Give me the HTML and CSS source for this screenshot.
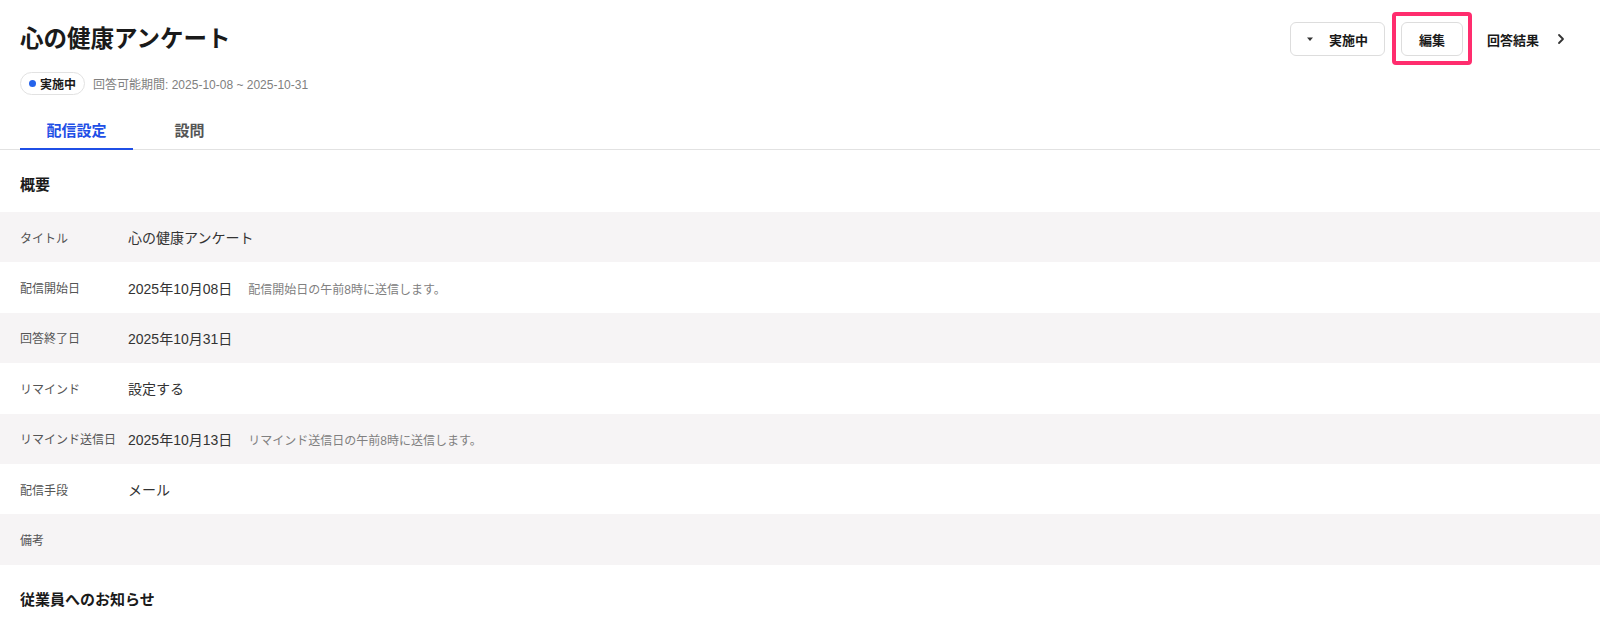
FILE: index.html
```html
<!DOCTYPE html>
<html lang="ja">
<head>
    <meta charset="UTF-8">
    <meta name="viewport" content="width=device-width, initial-scale=1.0">
    <title>心の健康アンケート</title>
    <link rel="stylesheet" href="styles.css">
</head>
<body>
    <!-- Header -->
    <header class="page-header">
        <div class="header-main">
            <h1 class="page-title">心の健康アンケート</h1>
            <div class="meta">
                <span class="status-badge"><span class="status-dot"></span>実施中</span>
                <span class="meta-period">回答可能期間: 2025-10-08 ~ 2025-10-31</span>
            </div>
        </div>
        <div class="header-actions">
            <button class="btn btn-status">
                <svg class="caret" width="10" height="10" viewBox="0 0 10 10"><path d="M2 3.5h6L5 7z" fill="#333"/></svg>
                実施中
            </button>
            <div class="highlight-wrap">
                <button class="btn btn-edit">編集</button>
                <span class="highlight"></span>
            </div>
            <a href="#" class="results-link">
                回答結果
                <svg width="16" height="16" viewBox="0 0 16 16"><path d="M6 4l4 4-4 4" fill="none" stroke="#333" stroke-width="1.8" stroke-linecap="round" stroke-linejoin="round"/></svg>
            </a>
        </div>
    </header>

    <!-- Tabs -->
    <nav class="tabs">
        <a href="#" class="tab active">配信設定</a>
        <a href="#" class="tab">設問</a>
    </nav>

    <!-- Overview -->
    <section class="section">
        <h2 class="section-title">概要</h2>
        <div class="detail-list">
            <div class="detail-row">
                <div class="detail-label">タイトル</div>
                <div class="detail-value">心の健康アンケート</div>
            </div>
            <div class="detail-row">
                <div class="detail-label">配信開始日</div>
                <div class="detail-value">2025年10月08日<span class="detail-note">配信開始日の午前8時に送信します。</span></div>
            </div>
            <div class="detail-row">
                <div class="detail-label">回答終了日</div>
                <div class="detail-value">2025年10月31日</div>
            </div>
            <div class="detail-row">
                <div class="detail-label">リマインド</div>
                <div class="detail-value">設定する</div>
            </div>
            <div class="detail-row">
                <div class="detail-label">リマインド送信日</div>
                <div class="detail-value">2025年10月13日<span class="detail-note">リマインド送信日の午前8時に送信します。</span></div>
            </div>
            <div class="detail-row">
                <div class="detail-label">配信手段</div>
                <div class="detail-value">メール</div>
            </div>
            <div class="detail-row">
                <div class="detail-label">備考</div>
                <div class="detail-value"></div>
            </div>
        </div>
    </section>

    <section class="section">
        <h2 class="section-title">従業員へのお知らせ</h2>
    </section>
</body>
</html>
```

FILE: styles.css
```css
:root {
    --text-main: #1a1a1a;
    --text-body: #333333;
    --text-label: #555555;
    --text-muted: #808080;
    --accent-blue: #1f4fe6;
    --border: #e2e2e2;
    --row-alt: #f6f4f5;
    --highlight: #ff2d6e;
}

body {
    margin: 0;
    font-family: "Liberation Sans", "Noto Sans CJK JP", sans-serif;
    color: var(--text-body);
    background: #ffffff;
}

/* Header */
.page-header {
    display: flex;
    justify-content: space-between;
    align-items: flex-start;
    padding: 22px 23px 0 20px;
}

.page-title {
    margin: 0;
    font-size: 23.5px;
    line-height: 34px;
    font-weight: 700;
    color: var(--text-main);
}

.meta {
    display: flex;
    align-items: center;
    gap: 8px;
    margin-top: 16px;
}

.status-badge {
    display: inline-flex;
    align-items: center;
    gap: 4px;
    height: 21px;
    padding: 0 8px 0 8px;
    border: 1px solid var(--border);
    border-radius: 12px;
    font-size: 12px;
    font-weight: 700;
    color: var(--text-main);
}

.status-dot {
    width: 7px;
    height: 7px;
    border-radius: 50%;
    background: #2563eb;
}

.meta-period {
    font-size: 12px;
    color: var(--text-muted);
}

.header-actions {
    display: flex;
    align-items: center;
    gap: 16px;
}

.btn {
    display: inline-flex;
    align-items: center;
    height: 34px;
    border: 1px solid #dddddd;
    border-radius: 6px;
    background: #ffffff;
    font-family: inherit;
    font-size: 13px;
    font-weight: 700;
    color: var(--text-main);
    cursor: pointer;
}

.btn-status {
    gap: 14px;
    padding: 0 16px 0 14px;
}

.btn-edit {
    padding: 0 17px;
}

/* Annotation frame around the edit button */
.highlight-wrap {
    position: relative;
}

.highlight {
    position: absolute;
    top: -10px;
    bottom: -9px;
    left: -9px;
    right: -9px;
    border: 4px solid var(--highlight);
    border-radius: 4px;
    pointer-events: none;
}

.results-link {
    display: inline-flex;
    align-items: center;
    gap: 14px;
    padding: 0 8px;
    font-size: 13px;
    font-weight: 700;
    color: var(--text-main);
    text-decoration: none;
}

/* Tabs */
.tabs {
    display: flex;
    margin-top: 19px;
    padding: 0 20px;
    border-bottom: 1px solid var(--border);
}

.tab {
    width: 113px;
    height: 34px;
    line-height: 34px;
    margin-bottom: -1px;
    text-align: center;
    font-size: 15px;
    font-weight: 700;
    color: var(--text-label);
    text-decoration: none;
    border-bottom: 2px solid transparent;
}

.tab.active {
    color: var(--accent-blue);
    border-bottom-color: var(--accent-blue);
}

/* Sections */
.section-title {
    margin: 0;
    padding: 24px 20px 16px;
    font-size: 15px;
    line-height: 22px;
    font-weight: 700;
    color: var(--text-main);
}

.detail-row {
    display: flex;
    align-items: center;
    height: 50.4px;
    padding: 0 20px;
}

.detail-row:nth-child(odd) {
    background: var(--row-alt);
}

.detail-label {
    width: 108px;
    flex-shrink: 0;
    font-size: 12px;
    color: var(--text-label);
}

.detail-value {
    font-size: 14px;
    color: var(--text-body);
}

.detail-note {
    margin-left: 16px;
    font-size: 12px;
    color: var(--text-muted);
}
```
